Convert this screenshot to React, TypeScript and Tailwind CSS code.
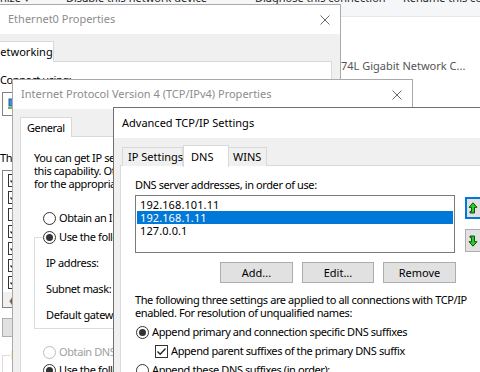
import React from "react";

function CloseX({ color }: { color: string }) {
  return (
    <svg width="10" height="10" viewBox="0 0 10 10">
      <path d="M0.5 0.5 L9.5 9.5 M9.5 0.5 L0.5 9.5" stroke={color} strokeWidth="1" fill="none" />
    </svg>
  );
}

function Radio({ checked, disabled }: { checked?: boolean; disabled?: boolean }) {
  return (
    <span
      className={
        "w-[13px] h-[13px] rounded-full border bg-white flex items-center justify-center shrink-0 " +
        (disabled ? "border-[#bcbcbc]" : "border-[#333333]")
      }
    >
      {checked ? <span className={"w-[7px] h-[7px] rounded-full " + (disabled ? "bg-[#bcbcbc]" : "bg-[#333333]")} /> : null}
    </span>
  );
}

function Check({ checked }: { checked?: boolean }) {
  return (
    <span className="w-[13px] h-[13px] border border-[#333333] bg-white flex items-center justify-center shrink-0">
      {checked ? (
        <svg width="11" height="11" viewBox="0 0 11 11">
          <path d="M1.5 5.5 L4.2 8.3 L9.5 2.5" stroke="#222" strokeWidth="1.3" fill="none" />
        </svg>
      ) : null}
    </span>
  );
}

function UpArrow() {
  return (
    <svg width="10" height="12" viewBox="0 0 10 12">
      <path d="M5 0.8 L9 5.3 L6.5 5.3 L6.5 11 L2 11 L2 9.5 L3.5 9.5 L3.5 5.3 L1 5.3 Z" fill="#1fd31f" stroke="#154d15" strokeWidth="1" />
    </svg>
  );
}

function DownArrow() {
  return (
    <svg width="10" height="12" viewBox="0 0 10 12">
      <path d="M5 11.2 L9 6.7 L6.5 6.7 L6.5 1 L2 1 L2 2.5 L3.5 2.5 L3.5 6.7 L1 6.7 Z" fill="#1fd31f" stroke="#154d15" strokeWidth="1" />
    </svg>
  );
}

export default function App() {
  return (
    <div className="relative w-[480px] h-[372px] overflow-hidden bg-white text-[11px] tracking-[-0.4px] text-black font-['Noto_Sans',sans-serif]">
      {/* Explorer background */}
      <div className="h-[17px] bg-[#f5f6f7] border-b border-[#e8e8e8] overflow-hidden">
        <div className="flex whitespace-nowrap -mt-[10px] text-[#1e1e1e] leading-[16px] tracking-[0px]">
          <span className="w-[92px] shrink-0 -ml-[26px]">Organize ▾</span>
          <span className="w-[189px] shrink-0">Disable this network device</span>
          <span className="w-[148px] shrink-0">Diagnose this connection</span>
          <span className="shrink-0">Rename this connection</span>
        </div>
      </div>
      <div className="absolute left-[341px] top-[58px] text-[#555555] whitespace-nowrap leading-[16px] tracking-[0px]">74L Gigabit Network C...</div>

      {/* Ethernet0 Properties */}
      <div className="absolute left-[-22px] top-[4px] w-[363px] h-[400px] border border-[#aaaaaa] bg-[#f0f0f0]">
        <div className="h-[29px] bg-white flex items-center justify-between pl-[29px] pr-[10px]">
          <span className="text-[#8c8c8c] tracking-[0px]">Ethernet0 Properties</span>
          <CloseX color="#6a6a6a" />
        </div>
        <div className="ml-[6px] mt-[7px] flex">
          <div className="h-[21px] w-[69px] bg-white border border-b-0 border-[#d9d9d9] pl-[6px] flex items-center leading-[16px] tracking-[0px]">Networking</div>
        </div>
        <div className="ml-[4px] mr-[8px] -mt-px h-[340px] bg-white border border-[#d9d9d9] pl-[16px]">
          <div className="mt-[10px] h-[16px] leading-[16px] whitespace-nowrap">Connect using:</div>
          <div className="mt-[4px] ml-[2px] h-[24px] border border-[#828282] flex items-center pl-[5px]">
            <svg width="8" height="12" viewBox="0 0 8 12">
              <rect x="1" y="1" width="6" height="7" fill="#3a8fd8" stroke="#2a5f96" strokeWidth="1" />
              <rect x="0" y="9" width="8" height="2" fill="#7cb342" />
            </svg>
          </div>
          <div className="mt-[34px] h-[16px] leading-[16px] whitespace-nowrap">This connection uses the following items:</div>
          <div className="mt-[4px] ml-[2px] h-[138px] border border-[#828282] pt-[1px]">
            {[true, true, false, true, true, true, true].map((c, i) => (
              <div key={i} className="h-[17px] flex items-center pl-[5px]">
                <Check checked={c} />
              </div>
            ))}
            <div className="h-[15px] mt-[1px] bg-[#f0f0f0] flex items-center pl-[5px] text-[#606060] text-[11px] leading-[15px]">❮</div>
          </div>
          <div className="mt-[10px] ml-[2px] h-[19px] w-[100px] bg-[#e1e1e1] border border-[#adadad]" />
          <fieldset className="mt-[11px] ml-[2px] h-[40px] border border-[#dcdcdc] pl-[7px]">
            <legend className="px-[1px] leading-[14px]">Description</legend>
          </fieldset>
        </div>
      </div>

      {/* IPv4 Properties */}
      <div className="absolute left-[12px] top-[79px] w-[401px] h-[310px] border border-[#aaaaaa] bg-[#f0f0f0]">
        <div className="h-[29px] bg-white flex items-center justify-between pl-[8px] pr-[10px]">
          <span className="text-[#8c8c8c] whitespace-nowrap tracking-[0px]">Internet Protocol Version 4 (TCP/IPv4) Properties</span>
          <CloseX color="#6a6a6a" />
        </div>
        <div className="ml-[7px] mt-[8px] flex">
          <div className="h-[20px] w-[52px] bg-white border border-b-0 border-[#d9d9d9] pl-[6px] flex items-center leading-[16px]">General</div>
        </div>
        <div className="ml-[7px] mr-[7px] -mt-px h-[260px] bg-white border border-[#d9d9d9] pl-[13px] pr-[13px]">
          <div className="mt-[14px] leading-[13px] whitespace-nowrap">
            <div>You can get IP settings assigned automatically if your network supports</div>
            <div>this capability. Otherwise, you need to ask your network administrator</div>
            <div>for the appropriate IP settings.</div>
          </div>
          <div className="mt-[20px] h-[16px] flex items-center gap-[3px] pl-[9px] whitespace-nowrap">
            <Radio />
            <span>Obtain an IP address automatically</span>
          </div>
          <fieldset className="mt-[3px] border border-[#dcdcdc] pl-[8px] pb-[5px]">
            <legend className="pr-[2px]">
              <span className="h-[16px] flex items-center gap-[3px] whitespace-nowrap">
                <Radio checked />
                <span>Use the following IP address:</span>
              </span>
            </legend>
            <div className="pl-[3px] mt-[10px] h-[16px] leading-[16px]">IP address:</div>
            <div className="pl-[3px] mt-[10px] h-[16px] leading-[16px]">Subnet mask:</div>
            <div className="pl-[3px] mt-[10px] h-[16px] leading-[16px] whitespace-nowrap">Default gateway:</div>
          </fieldset>
          <div className="mt-[15px] h-[16px] flex items-center gap-[3px] pl-[9px] whitespace-nowrap text-[#a0a0a0]">
            <Radio disabled />
            <span>Obtain DNS server address automatically</span>
          </div>
          <div className="mt-[2px] h-[16px] flex items-center gap-[3px] pl-[9px] whitespace-nowrap">
            <Radio checked />
            <span>Use the following DNS server addresses:</span>
          </div>
        </div>
      </div>

      {/* Advanced TCP/IP Settings */}
      <div className="absolute left-[113px] top-[107px] w-[380px] h-[280px] border border-[#707070] bg-[#f0f0f0]">
        <div className="h-[30px] bg-white flex items-center pl-[8px]">
          <span className="whitespace-nowrap tracking-[0px]">Advanced TCP/IP Settings</span>
        </div>
        <div className="ml-[6px] mt-[7px] h-[21px] flex items-end">
          <div className="ml-[2px] h-[19px] w-[61px] border border-b-0 border-[#d9d9d9] bg-[#f0f0f0] pl-[5px] flex items-center leading-[16px] whitespace-nowrap tracking-[0px]">IP Settings</div>
          <div className="relative z-10 h-[22px] w-[46px] border border-b-0 border-[#d9d9d9] bg-white pl-[7px] flex items-center leading-[16px] -mb-px tracking-[0px]">DNS</div>
          <div className="-ml-px h-[19px] w-[39px] border border-b-0 border-[#d9d9d9] bg-[#f0f0f0] pl-[4px] flex items-center leading-[16px] tracking-[0px]">WINS</div>
        </div>
        <div className="ml-[6px] -mt-px h-[230px] bg-white border border-[#d9d9d9] pl-[14px]">
          <div className="mt-[11px] h-[16px] leading-[16px] whitespace-nowrap">DNS server addresses, in order of use:</div>
          <div className="mt-[2px] flex items-start">
            <div className="w-[321px] h-[58px] border border-[#7a7a7a] pt-[2px] px-[1px] leading-[13px] tracking-[0.1px]">
              <div className="h-[13px] pl-[3px]">192.168.101.11</div>
              <div className="h-[13px] pl-[3px] bg-[#0078d7] text-white">192.168.1.11</div>
              <div className="h-[13px] pl-[3px]">127.0.0.1</div>
            </div>
            <div className="ml-[10px] flex flex-col">
              <div className="mt-[2px] w-[26px] h-[22px] border-2 border-[#0078d7] bg-[#e1e1e1] flex items-center pl-[1px]">
                <UpArrow />
              </div>
              <div className="mt-[10px] w-[26px] h-[23px] border border-[#adadad] bg-[#e1e1e1] flex items-center pl-[2px]">
                <DownArrow />
              </div>
            </div>
          </div>
          <div className="mt-[9px] w-[321px] flex justify-end gap-[9px] tracking-[0px]">
            <div className="w-[73px] h-[21px] bg-[#e1e1e1] border border-[#adadad] flex items-center justify-center leading-[16px]">Add...</div>
            <div className="w-[72px] h-[21px] bg-[#e1e1e1] border border-[#adadad] flex items-center justify-center leading-[16px]">Edit...</div>
            <div className="w-[73px] h-[21px] bg-[#e1e1e1] border border-[#adadad] flex items-center justify-center leading-[16px]">Remove</div>
          </div>
          <div className="mt-[10px] leading-[13px] whitespace-nowrap">
            <div>The following three settings are applied to all connections with TCP/IP</div>
            <div>enabled. For resolution of unqualified names:</div>
          </div>
          <div className="mt-[5px] h-[16px] flex items-center gap-[3px] pl-[1px] whitespace-nowrap">
            <Radio checked />
            <span>Append primary and connection specific DNS suffixes</span>
          </div>
          <div className="mt-[3px] h-[16px] flex items-center gap-[3px] pl-[20px] whitespace-nowrap">
            <Check checked />
            <span>Append parent suffixes of the primary DNS suffix</span>
          </div>
          <div className="mt-[3px] h-[16px] flex items-center gap-[3px] pl-[1px] whitespace-nowrap">
            <Radio />
            <span>Append these DNS suffixes (in order):</span>
          </div>
        </div>
      </div>
    </div>
  );
}
